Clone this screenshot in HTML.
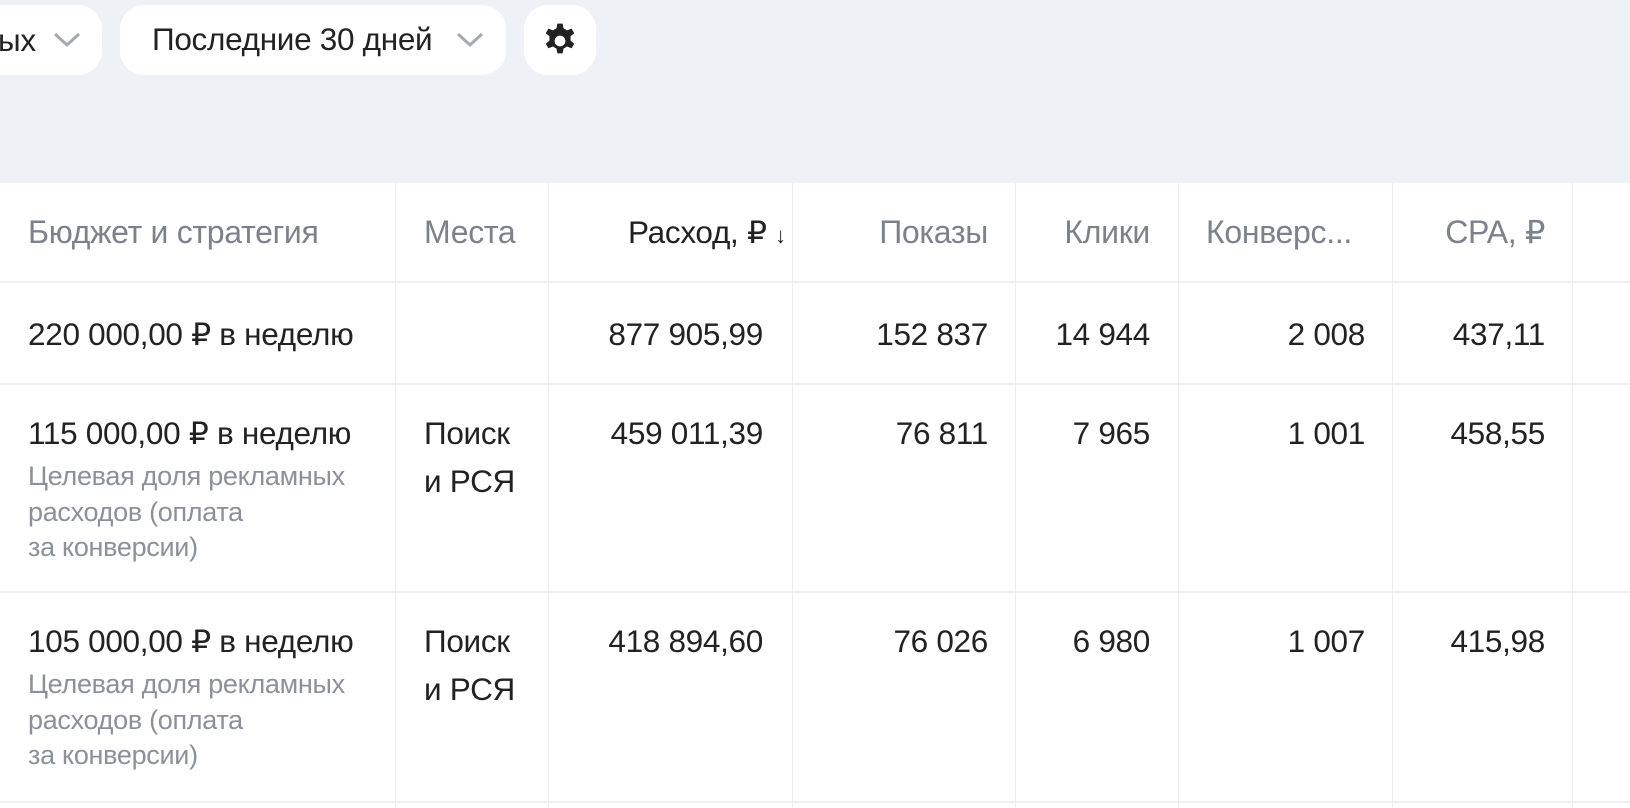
<!DOCTYPE html>
<html><head><meta charset="utf-8"><style>
*{margin:0;padding:0;box-sizing:border-box}
body{width:1630px;height:808px;overflow:hidden;background:#eef1f6;font-family:"Liberation Sans","DejaVu Sans",sans-serif;position:relative;color:#222}
.pill{position:absolute;top:5px;height:70px;background:#fff;border-radius:24px}
.t{position:absolute;white-space:nowrap;font-size:31.5px;line-height:36px;letter-spacing:-0.3px}
.r{text-align:right}
.h{color:#7d818b;font-size:32px}
.s{position:absolute;white-space:nowrap;font-size:27px;line-height:35.5px;color:#8c909a;letter-spacing:-0.3px}
.vl{position:absolute;top:183px;bottom:0;width:1px;background:#eceef2}
.hl{position:absolute;left:0;right:0;height:2px;background:#eef0f3}
</style></head><body>
<div class="pill" style="left:-40px;width:142px"></div>
<div class="t" style="left:-2px;top:22px">ых</div>
<svg style="position:absolute;left:52px;top:30px" width="30" height="20"><path d="M3 4 L15 15 L27 4" fill="none" stroke="#a6a9b2" stroke-width="3"/></svg>
<div class="pill" style="left:120px;width:386px"></div>
<div class="t" style="left:152px;top:21px">Последние 30 дней</div>
<svg style="position:absolute;left:455px;top:30px" width="30" height="20"><path d="M3 4 L15 15 L27 4" fill="none" stroke="#a6a9b2" stroke-width="3"/></svg>
<div class="pill" style="left:524px;width:72px"></div>
<svg style="position:absolute;left:541px;top:22px" width="38" height="38" viewBox="0 0 24 24"><path fill="#222" fill-rule="evenodd" d="M10.3 1h3.4l.5 3a8 8 0 0 1 2.2 1.3l2.9-1.1 1.7 2.9-2.4 2a8 8 0 0 1 0 2.6l2.4 2-1.7 2.9-2.9-1.1a8 8 0 0 1-2.2 1.3l-.5 3h-3.4l-.5-3a8 8 0 0 1-2.2-1.3l-2.9 1.1-1.7-2.9 2.4-2a8 8 0 0 1 0-2.6l-2.4-2 1.7-2.9 2.9 1.1A8 8 0 0 1 9.8 4zM12 8.6a3.4 3.4 0 1 0 0 6.8 3.4 3.4 0 0 0 0-6.8z"/></svg>

<div style="position:absolute;left:0;top:183px;width:1630px;height:625px;background:#fff"></div>
<div class="vl" style="left:395px"></div>
<div class="vl" style="left:548px"></div>
<div class="vl" style="left:792px"></div>
<div class="vl" style="left:1015px"></div>
<div class="vl" style="left:1178px"></div>
<div class="vl" style="left:1392px"></div>
<div class="vl" style="left:1572px"></div>
<div class="hl" style="top:281px"></div>
<div class="hl" style="top:383px"></div>
<div class="hl" style="top:591px"></div>
<div class="hl" style="top:801px"></div>

<div class="t h" style="left:28px;top:214px">Бюджет и стратегия</div>
<div class="t h" style="left:424px;top:214px">Места</div>
<div class="t" style="left:628px;top:214px">Расход, ₽ <span style="font-size:22px">↓</span></div>
<div class="t h r" style="right:642px;top:214px">Показы</div>
<div class="t h r" style="right:480px;top:214px">Клики</div>
<div class="t h" style="left:1206px;top:214px">Конверс...</div>
<div class="t h r" style="right:85px;top:214px">CPA, ₽</div>

<div class="t" style="left:28px;top:316px">220 000,00 ₽ в неделю</div>
<div class="t r" style="right:867px;top:316px">877 905,99</div>
<div class="t r" style="right:642px;top:316px">152 837</div>
<div class="t r" style="right:480px;top:316px">14 944</div>
<div class="t r" style="right:265px;top:316px">2 008</div>
<div class="t r" style="right:85px;top:316px">437,11</div>

<div class="t" style="left:28px;top:415px">115 000,00 ₽ в неделю</div>
<div class="s" style="left:28px;top:459px">Целевая доля рекламных<br>расходов (оплата<br>за конверсии)</div>
<div class="t" style="left:424px;line-height:48px;top:409px">Поиск<br>и РСЯ</div>
<div class="t r" style="right:867px;top:415px">459 011,39</div>
<div class="t r" style="right:642px;top:415px">76 811</div>
<div class="t r" style="right:480px;top:415px">7 965</div>
<div class="t r" style="right:265px;top:415px">1 001</div>
<div class="t r" style="right:85px;top:415px">458,55</div>

<div class="t" style="left:28px;top:623px">105 000,00 ₽ в неделю</div>
<div class="s" style="left:28px;top:667px">Целевая доля рекламных<br>расходов (оплата<br>за конверсии)</div>
<div class="t" style="left:424px;top:617px;line-height:48px">Поиск<br>и РСЯ</div>
<div class="t r" style="right:867px;top:623px">418 894,60</div>
<div class="t r" style="right:642px;top:623px">76 026</div>
<div class="t r" style="right:480px;top:623px">6 980</div>
<div class="t r" style="right:265px;top:623px">1 007</div>
<div class="t r" style="right:85px;top:623px">415,98</div>
</body></html>
